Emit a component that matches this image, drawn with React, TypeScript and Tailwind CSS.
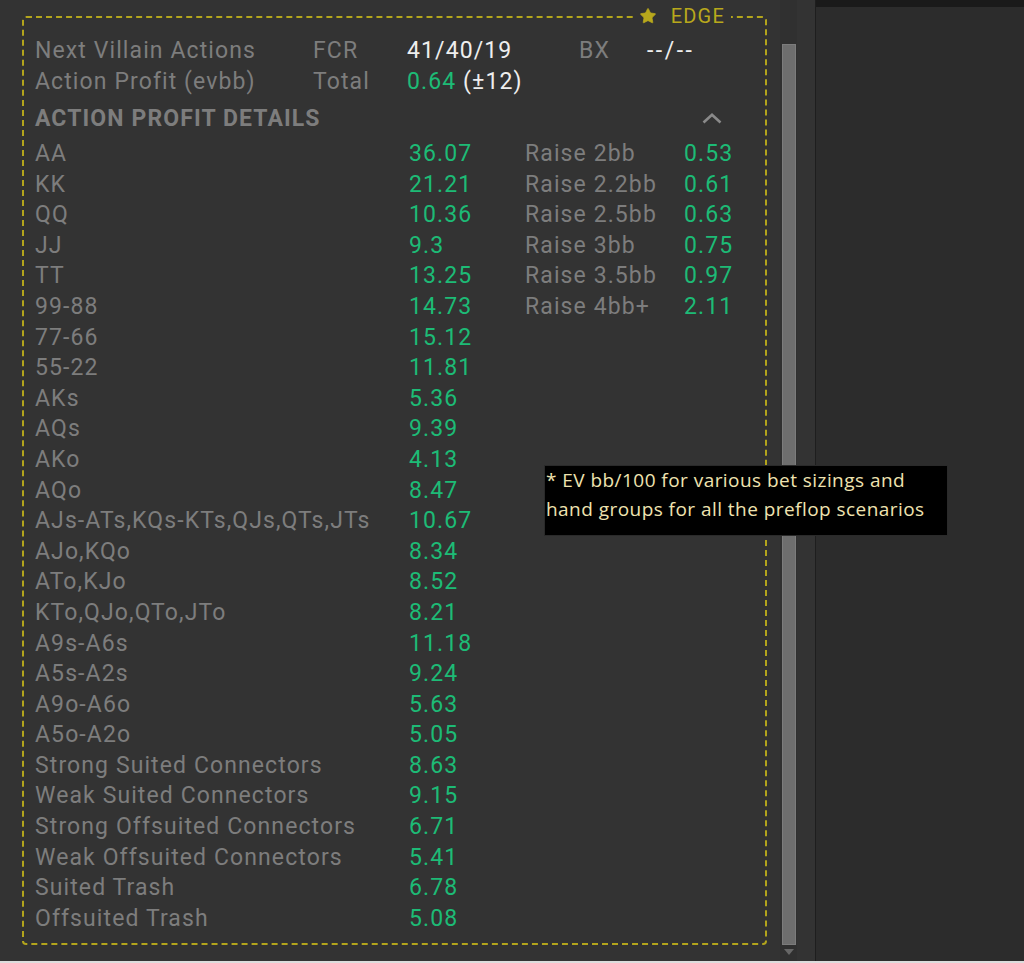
import { Star } from "lucide-react";

const handGroups: [string, string][] = [
  ["AA", "36.07"],
  ["KK", "21.21"],
  ["QQ", "10.36"],
  ["JJ", "9.3"],
  ["TT", "13.25"],
  ["99-88", "14.73"],
  ["77-66", "15.12"],
  ["55-22", "11.81"],
  ["AKs", "5.36"],
  ["AQs", "9.39"],
  ["AKo", "4.13"],
  ["AQo", "8.47"],
  ["AJs-ATs,KQs-KTs,QJs,QTs,JTs", "10.67"],
  ["AJo,KQo", "8.34"],
  ["ATo,KJo", "8.52"],
  ["KTo,QJo,QTo,JTo", "8.21"],
  ["A9s-A6s", "11.18"],
  ["A5s-A2s", "9.24"],
  ["A9o-A6o", "5.63"],
  ["A5o-A2o", "5.05"],
  ["Strong Suited Connectors", "8.63"],
  ["Weak Suited Connectors", "9.15"],
  ["Strong Offsuited Connectors", "6.71"],
  ["Weak Offsuited Connectors", "5.41"],
  ["Suited Trash", "6.78"],
  ["Offsuited Trash", "5.08"],
];

const raises: [string, string][] = [
  ["Raise 2bb", "0.53"],
  ["Raise 2.2bb", "0.61"],
  ["Raise 2.5bb", "0.63"],
  ["Raise 3bb", "0.75"],
  ["Raise 3.5bb", "0.97"],
  ["Raise 4bb+", "2.11"],
];

function Scrollbar() {
  return (
    <div className="flex w-[17px] flex-col items-center bg-[#303030] pt-[44px]">
      <div className="h-[901px] w-[14px] border border-[#7c7c7c] bg-[#6e6e6e]" />
      <div className="mt-[4px] h-0 w-0 border-x-[5px] border-t-[6px] border-x-transparent border-t-[#666666]" />
    </div>
  );
}

export default function App() {
  return (
    <div className="flex h-[963px] w-[1024px] flex-col overflow-hidden bg-[#dcdcdc] font-['Roboto',sans-serif]">
      <div className="flex h-[961px]">
        <div className="flex w-[815px] bg-[#333333]">
          <div className="w-[780px] pl-[22px] pt-[4px]">
            <fieldset className="h-[941px] w-[745px] rounded-[4px] border-2 border-dashed border-[#b3a51c] pb-0 pl-[11px] pr-[10px] pt-[5px]">
              <legend className="ml-auto mr-[24px] px-[6px] text-[20px] leading-[24px] tracking-[1.2px] text-[#b8a81c]">
                <span className="inline-flex items-center gap-[14px]">
                  <Star size={18} fill="#b8a81c" strokeWidth={1} color="#b8a81c" />
                  EDGE
                </span>
              </legend>

              <div className="grid grid-cols-[278px_94px_172px_68px_1fr] text-[23px] leading-[31px] tracking-[1.1px] text-[#7d7d7d]">
                <span>Next Villain Actions</span>
                <span>FCR</span>
                <span className="text-[#eeeeee]">41/40/19</span>
                <span>BX</span>
                <span className="tracking-[2.5px] text-[#eeeeee]">--/--</span>
                <span>Action Profit (evbb)</span>
                <span>Total</span>
                <span className="col-span-3">
                  <span className="text-[#1dbb76]">0.64</span>{" "}
                  <span className="text-[#eeeeee]">(±12)</span>
                </span>
              </div>

              <div className="mt-[6px] flex items-center justify-between pr-[33px] text-[23px] font-bold leading-[31px] tracking-[1.1px] text-[#7d7d7d]">
                <span>ACTION PROFIT DETAILS</span>
                <svg width="20" height="11" viewBox="0 0 20 11" fill="none" stroke="#8a8a8a" strokeWidth="2.6">
                  <path d="M1.5 9.5 L10 1.8 L18.5 9.5" />
                </svg>
              </div>

              <div className="mt-[5px] flex text-[23px] leading-[30.6px] tracking-[1.1px]">
                <div className="grid w-[490px] grid-cols-[374px_116px]">
                  {handGroups.map(([label, value]) => (
                    <div key={label} className="contents">
                      <span className="whitespace-nowrap text-[#7d7d7d]">{label}</span>
                      <span className="text-[#1dbb76]">{value}</span>
                    </div>
                  ))}
                </div>
                <div className="grid grid-cols-[159px_1fr] content-start">
                  {raises.map(([label, value]) => (
                    <div key={label} className="contents">
                      <span className="whitespace-nowrap text-[#7d7d7d]">{label}</span>
                      <span className="text-[#1dbb76]">{value}</span>
                    </div>
                  ))}
                </div>
              </div>
            </fieldset>
          </div>
          <Scrollbar />
          <div className="flex-1 bg-[#333333]" />
        </div>
        <div className="flex flex-1 flex-col border-l border-[#1e1e1e] bg-[#2c2c2c]">
          <div className="h-[7px] bg-[#1a1a1a]" />
        </div>
      </div>

      <div className="absolute left-[544px] top-[465px] h-[71px] w-[404px] border border-[#2a2a2a] bg-black pl-[1px] pt-0 font-['Open_Sans',sans-serif] text-[19px] leading-[29px] tracking-[0.45px] text-[#efe3b0]">
        * EV bb/100 for various bet sizings and
        <br />
        hand groups for all the preflop scenarios
      </div>
    </div>
  );
}
